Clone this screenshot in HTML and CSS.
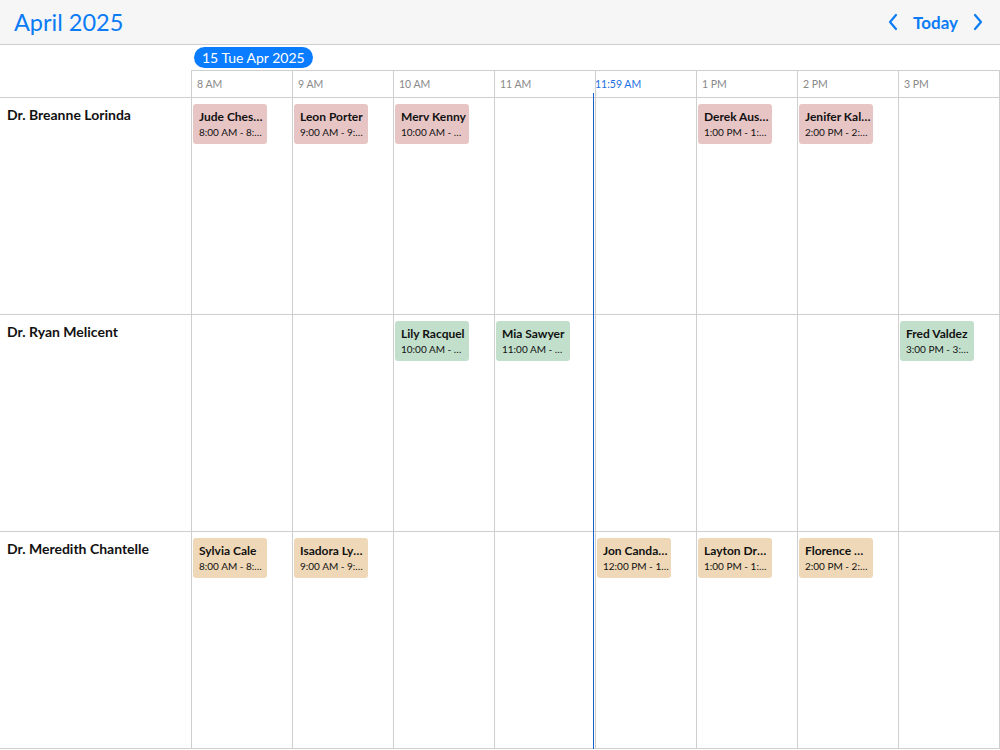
FILE: index.html
```html
<!DOCTYPE html>
<html lang="en">
<head>
    <meta charset="UTF-8">
    <meta name="viewport" content="width=device-width, initial-scale=1.0">
    <title>Scheduler</title>
    <link rel="stylesheet" href="styles.css">
</head>
<body>
    <div class="toolbar">
        <h1 class="title">April 2025</h1>
        <div class="nav">
            <svg class="chevron" width="12" height="18" viewBox="0 0 12 18"><path d="M9 2 L3 9 L9 16" /></svg>
            <span class="today">Today</span>
            <svg class="chevron" width="12" height="18" viewBox="0 0 12 18"><path d="M3 2 L9 9 L3 16" /></svg>
        </div>
    </div>

    <div class="scheduler">
        <div class="date-row">
            <div class="date-spacer"></div>
            <div class="date-cell"><span class="date-pill">15 Tue Apr 2025</span></div>
        </div>
        <div class="grid time-row">
            <div class="corner"></div>
            <div class="time">8 AM</div>
            <div class="time">9 AM</div>
            <div class="time">10 AM</div>
            <div class="time">11 AM</div>
            <div class="time now">11:59 AM</div>
            <div class="time">1 PM</div>
            <div class="time">2 PM</div>
            <div class="time">3 PM</div>
        </div>

        <div class="grid row">
            <div class="resource">Dr. Breanne Lorinda</div>
            <div class="cell"><div class="event pink"><div class="ev-title">Jude Chester</div><div class="ev-time">8:00 AM - 8:45 AM</div></div></div>
            <div class="cell"><div class="event pink"><div class="ev-title">Leon Porter</div><div class="ev-time">9:00 AM - 9:45 AM</div></div></div>
            <div class="cell"><div class="event pink"><div class="ev-title">Merv Kenny</div><div class="ev-time">10:00 AM - 10:45 AM</div></div></div>
            <div class="cell"></div>
            <div class="cell"></div>
            <div class="cell"><div class="event pink"><div class="ev-title">Derek Austin</div><div class="ev-time">1:00 PM - 1:45 PM</div></div></div>
            <div class="cell"><div class="event pink"><div class="ev-title">Jenifer Kalyn</div><div class="ev-time">2:00 PM - 2:45 PM</div></div></div>
            <div class="cell"></div>
        </div>

        <div class="grid row">
            <div class="resource">Dr. Ryan Melicent</div>
            <div class="cell"></div>
            <div class="cell"></div>
            <div class="cell"><div class="event green"><div class="ev-title">Lily Racquel</div><div class="ev-time">10:00 AM - 10:45 AM</div></div></div>
            <div class="cell"><div class="event green"><div class="ev-title">Mia Sawyer</div><div class="ev-time">11:00 AM - 11:45 AM</div></div></div>
            <div class="cell"></div>
            <div class="cell"></div>
            <div class="cell"></div>
            <div class="cell"><div class="event green"><div class="ev-title">Fred Valdez</div><div class="ev-time">3:00 PM - 3:45 PM</div></div></div>
        </div>

        <div class="grid row">
            <div class="resource">Dr. Meredith Chantelle</div>
            <div class="cell"><div class="event tan"><div class="ev-title">Sylvia Cale</div><div class="ev-time">8:00 AM - 8:45 AM</div></div></div>
            <div class="cell"><div class="event tan"><div class="ev-title">Isadora Lynn</div><div class="ev-time">9:00 AM - 9:45 AM</div></div></div>
            <div class="cell"></div>
            <div class="cell"></div>
            <div class="cell"><div class="event tan"><div class="ev-title">Jon Candace</div><div class="ev-time">12:00 PM - 12:45 PM</div></div></div>
            <div class="cell"><div class="event tan"><div class="ev-title">Layton Drake</div><div class="ev-time">1:00 PM - 1:45 PM</div></div></div>
            <div class="cell"><div class="event tan"><div class="ev-title">Florence Mae</div><div class="ev-time">2:00 PM - 2:45 PM</div></div></div>
            <div class="cell"></div>
        </div>

        <div class="now-line"></div>
    </div>
</body>
</html>
```

FILE: styles.css
```css
body {
    margin: 0;
    font-family: Lato, "Noto Sans", sans-serif;
    color: #111;
    background: #fff;
}
* {
    box-sizing: border-box;
}
.toolbar {
    height: 45px;
    background: #f6f6f6;
    border-bottom: 1px solid #cfcfcf;
    display: flex;
    align-items: center;
    justify-content: space-between;
    padding: 0 14px;
}
.title {
    margin: 0;
    font-size: 23.5px;
    font-weight: 400;
    color: #0b7cf5;
}
.nav {
    display: flex;
    align-items: center;
    gap: 14px;
    color: #0b7cf5;
    margin-right: 2px;
}
.today {
    font-size: 17px;
    font-weight: 700;
}
.chevron path {
    fill: none;
    stroke: #0b7cf5;
    stroke-width: 2.2;
    stroke-linecap: round;
    stroke-linejoin: round;
}
.scheduler {
    position: relative;
}
.date-row {
    display: flex;
    height: 26px;
}
.date-spacer {
    width: 191px;
}
.date-cell {
    flex: 1;
    border-bottom: 1px solid #cfcfcf;
    padding: 2px 0 0 3px;
}
.date-pill {
    display: inline-block;
    background: #0a7cff;
    color: #fff;
    font-size: 14px;
    line-height: 21px;
    height: 21px;
    padding: 0 8px;
    border-radius: 11px;
}
.grid {
    display: grid;
    grid-template-columns: 192px repeat(8, 101px);
    border-bottom: 1px solid #cfcfcf;
}
.time-row {
    height: 27px;
}
.corner {
    border-right: 1px solid #cfcfcf;
}
.time {
    border-right: 1px solid #cfcfcf;
    font-size: 10.5px;
    color: #888;
    padding: 7px 0 0 5px;
}
.time.now {
    color: #1a6fe0;
    padding-left: 0;
    margin-left: -1px;
}
.row {
    height: 217px;
}
.resource {
    border-right: 1px solid #cfcfcf;
    font-size: 14px;
    font-weight: 700;
    padding: 8px 7px;
}
.cell {
    border-right: 1px solid #cfcfcf;
    padding: 6px 0 0 1px;
}
.event {
    width: 74px;
    height: 40px;
    border-radius: 3px;
    padding: 5px 2px 5px 6px;
}
.pink {
    background: #e8c5c5;
}
.green {
    background: #c2dfcb;
}
.tan {
    background: #efd8b7;
}
.ev-title,
.ev-time {
    white-space: nowrap;
    overflow: hidden;
    text-overflow: ellipsis;
}
.ev-title {
    font-size: 12px;
    font-weight: 700;
    line-height: 16px;
}
.ev-time {
    font-size: 10px;
    line-height: 14px;
}
.now-line {
    position: absolute;
    left: 593px;
    top: 48px;
    bottom: 0;
    width: 1px;
    background: #1a5fd0;
}
```
